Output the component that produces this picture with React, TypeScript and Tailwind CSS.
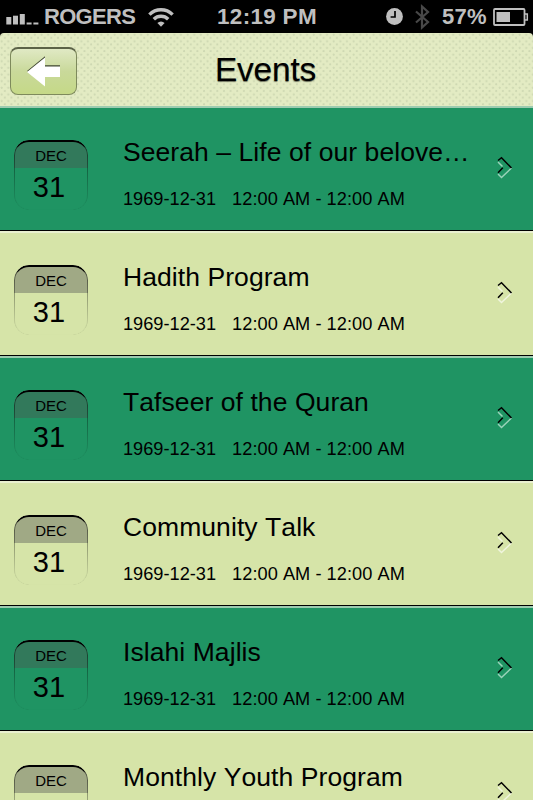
import { clsx } from "clsx";

interface EventItem {
  id: number;
  title: string;
  month: string;
  day: string;
  date: string;
  time: string;
}

const titles = [
  "Seerah – Life of our belove…",
  "Hadith Program",
  "Tafseer of the Quran",
  "Community Talk",
  "Islahi Majlis",
  "Monthly Youth Program",
];

const events: EventItem[] = titles.map((title, id) => ({
  id,
  title,
  month: "DEC",
  day: "31",
  date: "1969-12-31",
  time: "12:00 AM - 12:00 AM",
}));

function SignalIcon() {
  return (
    <svg width="33" height="11" viewBox="0 0 33 11" fill="#bfbfbf">
      <rect x="0.3" y="3" width="5" height="7.5" />
      <rect x="7" y="1.7" width="5" height="8.8" />
      <rect x="13.8" y="0" width="5" height="10.5" />
      <rect x="20.6" y="8.5" width="5" height="2" />
      <rect x="27.4" y="8.5" width="5" height="2" />
    </svg>
  );
}

function WifiIcon() {
  return (
    <svg width="26" height="20" viewBox="0 0 26 20" fill="none" stroke="#bfbfbf">
      <path d="M1.4 7.6a16.4 16.4 0 0 1 23.2 0" strokeWidth="3.4" />
      <path d="M5.8 12.2a10.2 10.2 0 0 1 14.4 0" strokeWidth="3.4" />
      <path d="M13 19.8 9.4 16a5 5 0 0 1 7.2 0z" fill="#bfbfbf" stroke="none" />
    </svg>
  );
}

function ClockIcon() {
  return (
    <svg width="17" height="17" viewBox="0 0 17 17">
      <circle cx="8.5" cy="8.5" r="8.4" fill="#bfbfbf" />
      <path d="M9 3v6H4.6" fill="none" stroke="#000" strokeWidth="1.7" />
    </svg>
  );
}

function BluetoothIcon() {
  return (
    <svg width="15" height="26" viewBox="0 0 15 26" fill="none" stroke="#484848" strokeWidth="2.2">
      <path d="M1 7.5 13 18l-6 5.5V2.5L13 8 1 18.5" />
    </svg>
  );
}

function BatteryIcon() {
  return (
    <svg width="36" height="18" viewBox="0 0 36 18" fill="none">
      <rect x="1" y="1" width="30.5" height="16" rx="1" stroke="#bfbfbf" strokeWidth="1.8" />
      <path d="M32 6h2.3v6H32" stroke="#bfbfbf" strokeWidth="1.5" />
      <rect x="3.5" y="4" width="13.5" height="10" fill="#bfbfbf" />
    </svg>
  );
}

function StatusBar() {
  return (
    <div className="flex h-[33px] items-center bg-black pl-[6px] text-[22px] font-bold text-[#bfbfbf]">
      <div className="mt-[6px] w-[38px]"><SignalIcon /></div>
      <span className="w-[104px] tracking-[-0.7px] whitespace-nowrap">ROGERS</span>
      <div className="w-[69px]"><WifiIcon /></div>
      <span className="w-[169px] text-[22.5px] tracking-[0.3px] whitespace-nowrap">12:19 PM</span>
      <div className="w-[29px]"><ClockIcon /></div>
      <div className="w-[27px]"><BluetoothIcon /></div>
      <span className="w-[51px] tracking-[0.3px]">57%</span>
      <BatteryIcon />
    </div>
  );
}

function Header() {
  return (
    <header className="relative flex h-[73px] items-center justify-center rounded-t-[4px] bg-[#e3ebc3] bg-[radial-gradient(circle_at_1.6px_1.6px,#ced8b2_0.7px,transparent_1.4px),radial-gradient(circle_at_4.9px_4.9px,#ced8b2_0.7px,transparent_1.4px)] bg-size-[6.65px_6.65px]">
      <button
        aria-label="Back"
        className="absolute top-[14px] left-[10px] flex h-[48px] w-[67px] items-center justify-center rounded-[8px] border border-[#7e8a5c] border-t-2 border-t-[#5b6247] bg-linear-to-b from-[#e0e9c4] via-[#c9d99a] to-[#c5d987]"
      >
        <svg width="36" height="32" viewBox="0 0 36 32">
          <path d="M1 15 19 0.3V9.2H34V19H19V29Z" fill="#3f4630" />
          <path d="M1 16 19 1.6V10.5H34V21H19V30.5Z" fill="#fff" />
        </svg>
      </button>
      <h1 className="-translate-x-px text-[33.5px] leading-none tracking-[-0.2px] text-black [text-shadow:0_1px_1px_rgba(0,0,0,0.5)]">Events</h1>
    </header>
  );
}

function DateBadge({ month, day }: { month: string; day: string }) {
  return (
    <div className="relative h-[70px] w-[74px] overflow-hidden rounded-[15px] text-center text-black">
      <div className="h-[28px] bg-[#4f4f4f]/40 pt-[7px] text-[15px] leading-[17px]">{month}</div>
      <div className="-translate-x-[2px] pt-[3px] text-[29px] leading-[32px]">{day}</div>
      <div className="absolute inset-0 rounded-[15px] border border-black/50 border-t-2 border-t-black mask-b-from-10% mask-b-to-100%" />
    </div>
  );
}

function Chevron({ dark }: { dark: boolean }) {
  return (
    <svg width="16" height="24" viewBox="0 0 16 24" fill="none" strokeWidth="1.5">
      <path d="M1 6 5.5 10.5M1 18 4.5 21.5 14.5 12" stroke={dark ? "#9bd3ba" : "#f0f5de"} />
      <path d="M1 4.5 4.5 1.7 14.5 12M1 16.8 5.8 11.8" stroke="#000" />
    </svg>
  );
}

function EventRow({ event, dark }: { event: EventItem; dark: boolean }) {
  return (
    <li
      className={clsx(
        "flex h-[125px] border-t-2 border-b border-b-black pl-[14px]",
        dark ? "border-t-[#9ccbb0] bg-[#1f9463]" : "border-t-[#e9f0cf] bg-[#d6e4a8]"
      )}
    >
      <div className="w-[109px] pt-[32px]"><DateBadge month={event.month} day={event.day} /></div>
      <div className="w-[356px] pt-[29px] whitespace-nowrap text-black [font-kerning:none]">
        <p className="text-[26.5px] leading-[30px] tracking-[0.07px]">{event.title}</p>
        <p className="mt-[21px] flex gap-[16px] text-[18.2px] leading-[22px]">
          <span>{event.date}</span>
          <span className="tracking-[0.05px]">{event.time}</span>
        </p>
      </div>
      <div className="ml-[18px] pt-[48px]"><Chevron dark={dark} /></div>
    </li>
  );
}

export default function App() {
  return (
    <div className="h-[800px] w-[533px] overflow-hidden bg-black font-['Liberation_Sans',Arial,sans-serif]">
      <StatusBar />
      <Header />
      <ul>
        {events.map((event) => (
          <EventRow key={event.id} event={event} dark={event.id % 2 === 0} />
        ))}
      </ul>
    </div>
  );
}
